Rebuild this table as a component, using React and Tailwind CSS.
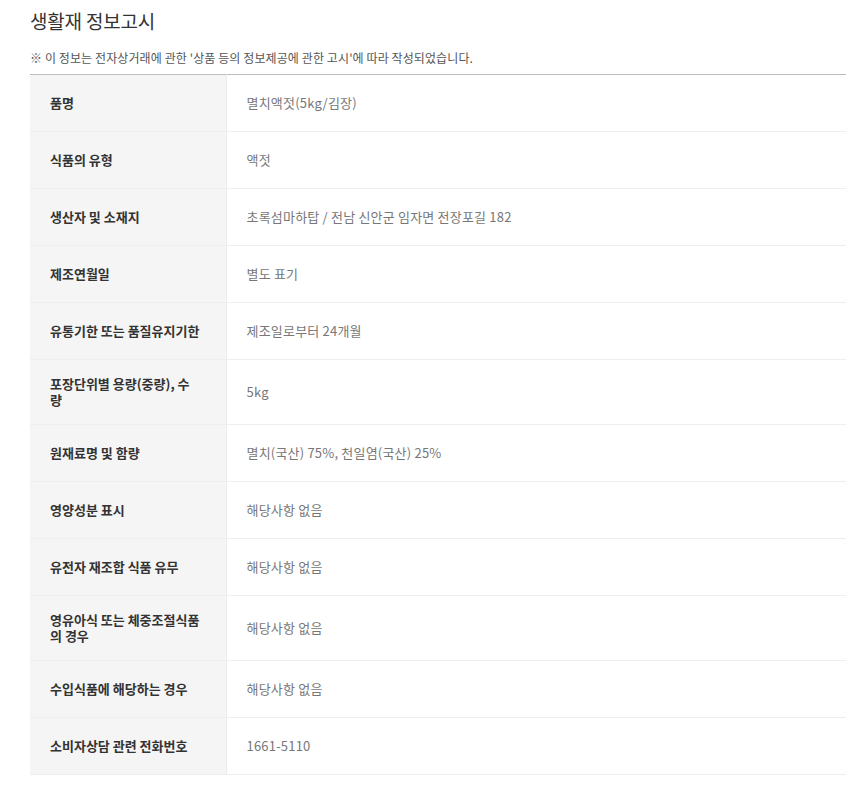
import React from 'react';

const rows = [
  ['품명', '멸치액젓(5kg/김장)'],
  ['식품의 유형', '액젓'],
  ['생산자 및 소재지', '초록섬마하탑 / 전남 신안군 임자면 전장포길 182'],
  ['제조연월일', '별도 표기'],
  ['유통기한 또는 품질유지기한', '제조일로부터 24개월'],
  ['포장단위별 용량(중량), 수\n량', '5kg'],
  ['원재료명 및 함량', '멸치(국산) 75%, 천일염(국산) 25%'],
  ['영양성분 표시', '해당사항 없음'],
  ['유전자 재조합 식품 유무', '해당사항 없음'],
  ['영유아식 또는 체중조절식품\n의 경우', '해당사항 없음'],
  ['수입식품에 해당하는 경우', '해당사항 없음'],
  ['소비자상담 관련 전화번호', '1661-5110'],
];

const App = () => {
  return (
    <div
      className="min-h-screen bg-white pl-[30px] pt-[7px] pb-6"
      style={{ fontFamily: '"Malgun Gothic", "Noto Sans CJK KR", "Noto Sans", sans-serif' }}
    >
      <h2 className="text-[19px] leading-[28px] font-normal text-[#333] tracking-[-0.2px]">생활재 정보고시</h2>
      <p className="mt-[15px] text-[12px] leading-[16px] text-[#555] tracking-[0.1px]">
        ※ 이 정보는 전자상거래에 관한 '상품 등의 정보제공에 관한 고시'에 따라 작성되었습니다.
      </p>

      {/* info table */}
      <table className="mt-[8px] w-[816px] border-collapse border-t border-[#bdbdbd]">
        <tbody>
          {rows.map(([label, value]) => (
            <tr key={label} className="border-b border-[#eeeeee]">
              <th className="w-[196px] h-[57px] bg-[#f5f5f5] border-r border-[#ececec] pl-5 pr-4 py-4 text-left align-middle whitespace-pre-line text-[13px] leading-[16px] font-semibold text-[#333]">
                {label}
              </th>
              <td className="h-[57px] pl-5 pr-4 py-4 align-middle text-[13px] leading-[16px] text-[#777] tracking-[0.2px]">
                {value}
              </td>
            </tr>
          ))}
        </tbody>
      </table>
    </div>
  );
};

export default App;
